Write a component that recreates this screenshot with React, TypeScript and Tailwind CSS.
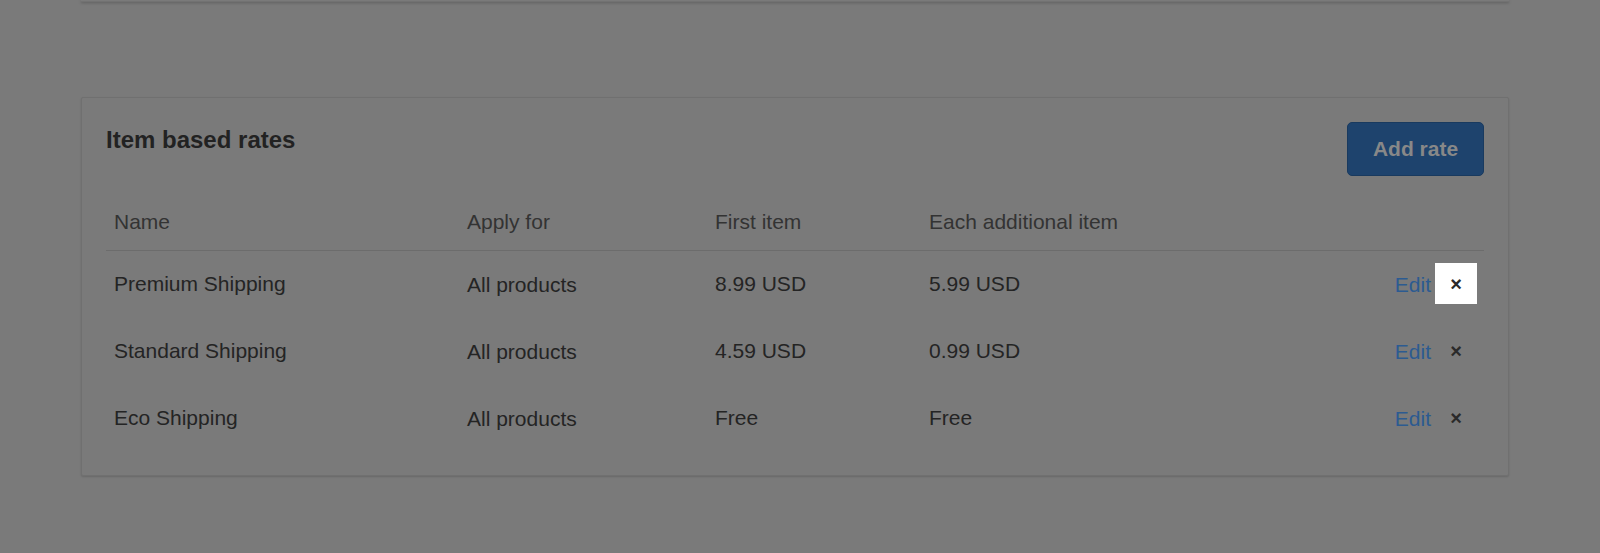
const rates = [
  { name: "Premium Shipping", apply: "All products", first: "8.99 USD", each: "5.99 USD", active: true },
  { name: "Standard Shipping", apply: "All products", first: "4.59 USD", each: "0.99 USD", active: false },
  { name: "Eco Shipping", apply: "All products", first: "Free", each: "Free", active: false },
];

export default function App() {
  return (
    <div
      className="min-h-[553px] w-full bg-[#7a7a7a] pb-[80px]"
      style={{ fontFamily: '"Liberation Sans", Arial, Helvetica, sans-serif' }}
    >
      {/* bottom edge of the card above */}
      <div className="ml-[81px] h-[2px] w-[1428px] border-b border-[#727272] bg-[#7a7a7a] shadow-[0_1px_3px_rgba(0,0,0,0.25)]" />

      {/* Item based rates */}
      <section className="ml-[81px] mt-[95px] w-[1428px] rounded-[2px] border border-[#707070] bg-[#7a7a7a] px-[24px] pb-[23px] pt-[24px] shadow-[0_1px_2px_rgba(0,0,0,0.15)]">
        <div className="flex items-start justify-between">
          <h2 className="text-[24px] font-bold leading-[36px] text-[#222222]">Item based rates</h2>
          <button className="h-[54px] w-[137px] rounded-[5px] border border-[#193a5f] bg-[#1e436d] text-[21px] font-bold text-[#888888]">
            Add rate
          </button>
        </div>

        <div className="grid h-[75px] grid-cols-[353px_248px_214px_1fr] items-end border-b border-[#6c6c6c] pb-[16px] text-[21px] leading-[24px] text-[#333333]">
          <div className="pl-2">Name</div>
          <div className="pl-2">Apply for</div>
          <div className="pl-2">First item</div>
          <div className="pl-2">Each additional item</div>
        </div>

        {rates.map((r) => (
          <div
            key={r.name}
            className="grid h-[67px] grid-cols-[353px_248px_214px_1fr] items-center pb-[2px] text-[21px] leading-[24px] text-[#242424]"
          >
            <div className="pl-2">{r.name}</div>
            <div className="pl-2 pt-[3px]">{r.apply}</div>
            <div className="pl-2">{r.first}</div>
            <div className="flex items-center justify-between pl-2 pr-[7px]">
              <span>{r.each}</span>
              <div className="flex items-center gap-[4px]">
                <span className="pt-[3px] text-[#2c5b91]">Edit</span>
                <span
                  className={
                    "flex h-[41px] w-[42px] items-center justify-center text-[20px] font-bold text-[#2a2a2a] " +
                    (r.active ? "bg-white" : "")
                  }
                >
                  ×
                </span>
              </div>
            </div>
          </div>
        ))}
      </section>
    </div>
  );
}
